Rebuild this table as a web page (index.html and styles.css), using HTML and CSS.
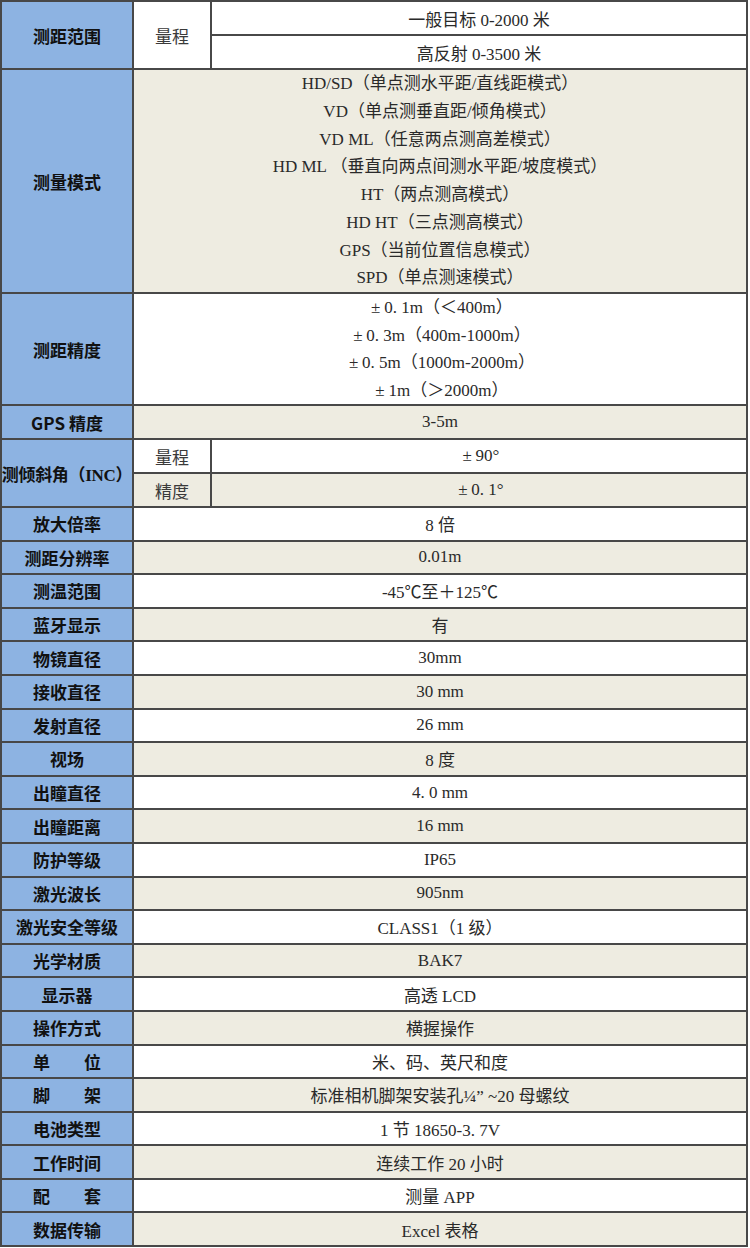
FILE: index.html
```html
<!DOCTYPE html>
<html lang="zh">
<head>
<meta charset="utf-8">
<title>参数</title>
<link rel="stylesheet" href="styles.css">
</head>
<body>
<div class="spec">
  <div class="lab span2">测距范围</div>
  <div class="sub w span2">量程</div>
  <div class="val w">一般目标 0-2000 米</div>
  <div class="val w">高反射 0-3500 米</div>

  <div class="lab">测量模式</div>
  <div class="val b wide multi modes">
    <span>HD/SD（单点测水平距/直线距模式）</span>
    <span>VD（单点测垂直距/倾角模式）</span>
    <span>VD ML（任意两点测高差模式）</span>
    <span>HD ML （垂直向两点间测水平距/坡度模式）</span>
    <span>HT（两点测高模式）</span>
    <span>HD HT（三点测高模式）</span>
    <span>GPS（当前位置信息模式）</span>
    <span>SPD（单点测速模式）</span>
  </div>

  <div class="lab">测距精度</div>
  <div class="val w wide multi acc">
    <span><span class="pm">±</span>0. 1m（＜400m）</span>
    <span><span class="pm">±</span>0. 3m（400m-1000m）</span>
    <span><span class="pm">±</span>0. 5m（1000m-2000m）</span>
    <span><span class="pm">±</span>1m（＞2000m）</span>
  </div>

  <div class="lab">GPS 精度</div>
  <div class="val b wide">3-5m</div>

  <div class="lab span2 nowrap">测倾斜角（INC）</div>
  <div class="sub w">量程</div>
  <div class="val w"><span class="pm">±</span>90°</div>
  <div class="sub b">精度</div>
  <div class="val b"><span class="pm">±</span>0. 1°</div>

  <div class="lab">放大倍率</div><div class="val w wide">8 倍</div>
  <div class="lab">测距分辨率</div><div class="val b wide">0.01m</div>
  <div class="lab">测温范围</div><div class="val w wide">-45℃至＋125℃</div>
  <div class="lab">蓝牙显示</div><div class="val b wide">有</div>
  <div class="lab">物镜直径</div><div class="val w wide">30mm</div>
  <div class="lab">接收直径</div><div class="val b wide">30 mm</div>
  <div class="lab">发射直径</div><div class="val w wide">26 mm</div>
  <div class="lab">视场</div><div class="val b wide">8 度</div>
  <div class="lab">出瞳直径</div><div class="val w wide">4. 0 mm</div>
  <div class="lab">出瞳距离</div><div class="val b wide">16 mm</div>
  <div class="lab">防护等级</div><div class="val w wide">IP65</div>
  <div class="lab">激光波长</div><div class="val b wide">905nm</div>
  <div class="lab">激光安全等级</div><div class="val w wide">CLASS1（1 级）</div>
  <div class="lab">光学材质</div><div class="val b wide">BAK7</div>
  <div class="lab">显示器</div><div class="val w wide">高透 LCD</div>
  <div class="lab">操作方式</div><div class="val b wide">横握操作</div>
  <div class="lab"><span class="spread"><span>单</span><span>位</span></span></div><div class="val w wide">米、码、英尺和度</div>
  <div class="lab"><span class="spread"><span>脚</span><span>架</span></span></div><div class="val b wide">标准相机脚架安装孔¼” ~20 母螺纹</div>
  <div class="lab">电池类型</div><div class="val w wide">1 节 18650-3. 7V</div>
  <div class="lab">工作时间</div><div class="val b wide">连续工作 20 小时</div>
  <div class="lab"><span class="spread"><span>配</span><span>套</span></span></div><div class="val w wide">测量 APP</div>
  <div class="lab">数据传输</div><div class="val b wide">Excel 表格</div>
</div>
</body>
</html>
```
FILE: styles.css
```css
html, body {
  margin: 0;
  padding: 0;
  background: #ffffff;
}

.spec {
  width: 748px;
  box-sizing: border-box;
  display: grid;
  grid-template-columns: 130px 76px 534px;
  grid-template-rows: 32px 32px 222px 110px 32px 32px 32px repeat(22, 31.6px);
  gap: 2px;
  padding: 2px;
  background: #484848;
}

.spec > div {
  display: flex;
  align-items: center;
  justify-content: center;
  text-align: center;
  min-width: 0;
}

.lab {
  background: #8db3e2;
  color: #111111;
  font-family: "Noto Sans CJK SC", sans-serif;
  font-weight: 700;
  font-size: 17px;
}

.spec > .nowrap {
  white-space: nowrap;
  font-family: "Liberation Serif", "Noto Sans CJK SC", serif;
  font-size: 17px;
  letter-spacing: -0.3px;
}

.span2 {
  grid-row: span 2;
}

.sub {
  font-family: "Noto Sans CJK SC", sans-serif;
  font-size: 17px;
  color: #3a3a3a;
}

.val {
  font-family: "Liberation Serif", "Noto Sans CJK SC", serif;
  font-size: 17px;
  color: #2a2a2a;
  white-space: pre;
}

.pm {
  display: inline-block;
  width: 17px;
  text-align: center;
}

.wide {
  grid-column: span 2;
}

.w {
  background: #ffffff;
}

.b {
  background: #eeece1;
}

.spec > .multi {
  flex-direction: column;
}

.modes > span {
  display: block;
  line-height: 27.75px;
}

.acc > span {
  display: block;
  line-height: 27.5px;
}

.spread {
  display: inline-flex;
  justify-content: space-between;
  width: 68px;
}
```
